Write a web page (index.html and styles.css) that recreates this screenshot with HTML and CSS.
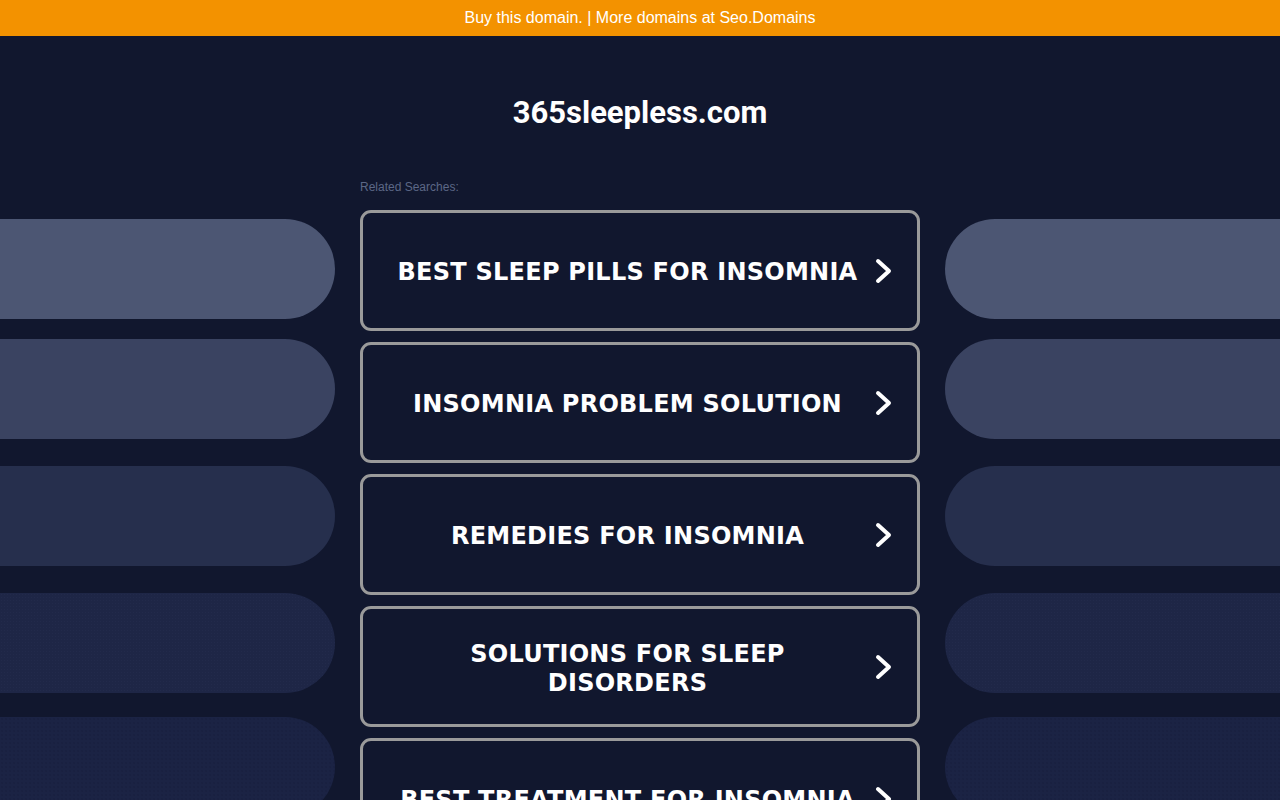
FILE: index.html
```html
<!DOCTYPE html>
<html>
<head>
<meta charset="utf-8">
<title>365sleepless.com</title>
<link rel="stylesheet" href="styles.css">
</head>
<body>
<div class="topbar">Buy this domain. | More domains at Seo.Domains</div>
<div class="stage">
  <div class="side side-left">
    <div class="pill p1"></div>
    <div class="pill p2"></div>
    <div class="pill p3"></div>
    <div class="pill p4"></div>
    <div class="pill p5"></div>
  </div>
  <div class="center">
    <h1 class="domain">365sleepless.com</h1>
    <div class="related">Related Searches:</div>
    <div class="links">
      <a class="link" href="#"><span class="label">BEST SLEEP PILLS FOR INSOMNIA</span><svg class="chev" viewBox="0 0 24 30" width="24" height="30"><path d="M6 5 L17 15 L6 25" fill="none" stroke="#fff" stroke-width="4" stroke-linecap="round" stroke-linejoin="round"/></svg></a>
      <a class="link" href="#"><span class="label">INSOMNIA PROBLEM SOLUTION</span><svg class="chev" viewBox="0 0 24 30" width="24" height="30"><path d="M6 5 L17 15 L6 25" fill="none" stroke="#fff" stroke-width="4" stroke-linecap="round" stroke-linejoin="round"/></svg></a>
      <a class="link" href="#"><span class="label">REMEDIES FOR INSOMNIA</span><svg class="chev" viewBox="0 0 24 30" width="24" height="30"><path d="M6 5 L17 15 L6 25" fill="none" stroke="#fff" stroke-width="4" stroke-linecap="round" stroke-linejoin="round"/></svg></a>
      <a class="link" href="#"><span class="label">SOLUTIONS FOR SLEEP DISORDERS</span><svg class="chev" viewBox="0 0 24 30" width="24" height="30"><path d="M6 5 L17 15 L6 25" fill="none" stroke="#fff" stroke-width="4" stroke-linecap="round" stroke-linejoin="round"/></svg></a>
      <a class="link" href="#"><span class="label">BEST TREATMENT FOR INSOMNIA</span><svg class="chev" viewBox="0 0 24 30" width="24" height="30"><path d="M6 5 L17 15 L6 25" fill="none" stroke="#fff" stroke-width="4" stroke-linecap="round" stroke-linejoin="round"/></svg></a>
    </div>
  </div>
  <div class="side side-right">
    <div class="pill p1"></div>
    <div class="pill p2"></div>
    <div class="pill p3"></div>
    <div class="pill p4"></div>
    <div class="pill p5"></div>
  </div>
</div>
</body>
</html>
```
FILE: styles.css
```css
html, body {
  margin: 0;
  padding: 0;
  background: #11172e;
  overflow: hidden;
  height: 800px;
}
body {
  font-family: "Liberation Sans", Arial, sans-serif;
  color: #fff;
}
.topbar {
  height: 36px;
  line-height: 35px;
  background: #f39200;
  color: #fff;
  text-align: center;
  font-size: 16px;
}
.stage {
  display: grid;
  grid-template-columns: 335px 560px 335px;
  column-gap: 25px;
  width: 1305px;
}
.side {
  display: flex;
  flex-direction: column;
  padding-top: 183px;
}
.pill {
  height: 100px;
  flex: none;
}
.side-left .pill {
  border-radius: 0 50px 50px 0;
}
.side-right .pill {
  border-radius: 50px 0 0 50px;
}
.p1 { background: #4c5673; }
.p2 { background: #3a4361; margin-top: 20px; }
.p3 { background: #262f4d; margin-top: 27px; }
.p4 {
  background-color: #1e2646;
  background-image: radial-gradient(circle, rgba(40,50,85,0.35) 0.5px, transparent 0.8px);
  background-size: 3px 3px;
  margin-top: 27px;
}
.p5 {
  background-color: #1b2344;
  background-image: radial-gradient(circle, rgba(12,16,36,0.35) 0.5px, transparent 0.8px);
  background-size: 4px 4px;
  margin-top: 24px;
}
.center {
  display: flex;
  flex-direction: column;
}
.domain {
  margin: 59px 0 0;
  height: 36px;
  line-height: 36px;
  text-align: center;
  font-family: Roboto, "Liberation Sans", Arial, sans-serif;
  font-weight: 700;
  font-size: 31px;
  color: #fff;
}
.related {
  margin-top: 49px;
  font-size: 12px;
  line-height: 14px;
  color: #5c6786;
}
.links {
  margin-top: 16px;
  display: flex;
  flex-direction: column;
  gap: 11px;
}
.link {
  box-sizing: border-box;
  height: 121px;
  border: 3px solid #9a9a9a;
  border-radius: 11px;
  display: flex;
  align-items: center;
  padding: 0 21px 0 20px;
  text-decoration: none;
  color: #fff;
  background: #11172e;
}
.label {
  flex: 1;
  text-align: center;
  font-family: "DejaVu Sans", Verdana, sans-serif;
  font-weight: 700;
  font-size: 24px;
  letter-spacing: 0.25px;
  line-height: 29px;
  padding: 4px 10px 0;
}
.chev {
  flex: none;
  display: block;
}
```
